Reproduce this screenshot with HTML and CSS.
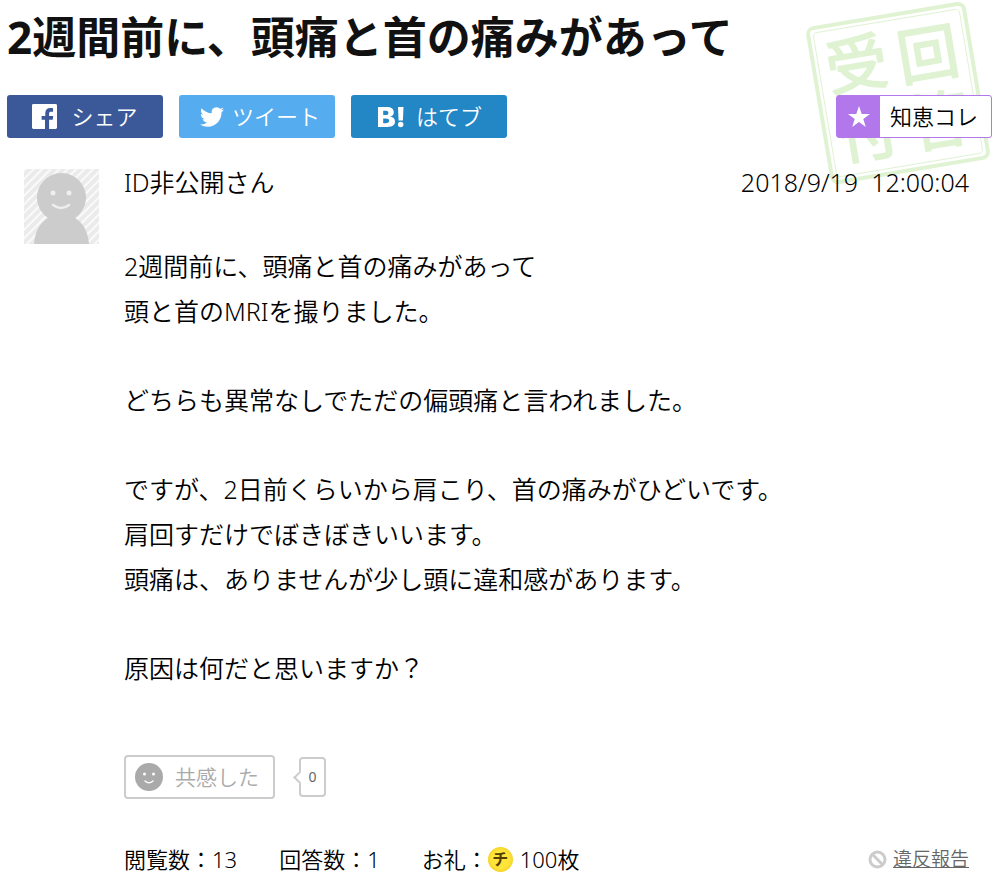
FILE: index.html
```html
<!DOCTYPE html>
<html lang="ja">
<head>
    <meta charset="UTF-8">
    <meta name="viewport" content="width=device-width, initial-scale=1.0">
    <title>2週間前に、頭痛と首の痛みがあって</title>
    <link rel="stylesheet" href="styles.css">
</head>
<body>
    <div class="question">
        <svg class="stamp" viewBox="0 0 188 188" aria-hidden="true">
            <g transform="translate(93 93) rotate(-9.5)">
                <rect x="-79" y="-78" width="158" height="156" rx="6" fill="none" stroke-width="4"/>
                <rect x="-74" y="-73" width="148" height="146" rx="4" fill="none" stroke-width="1"/>
                <g class="stamp-text">
                    <text x="-36" y="-13">受</text>
                    <text x="36" y="-11">回</text>
                    <text x="-36" y="57">付</text>
                    <text x="36" y="57">答</text>
                </g>
            </g>
        </svg>

        <h1 class="title">2週間前に、頭痛と首の痛みがあって</h1>

        <div class="bar">
            <a href="#" class="share facebook">
                <svg width="25" height="25" viewBox="0 0 26 26" aria-hidden="true">
                    <path fill="#fff" d="M1.500 0h23A1.500 1.500 0 0 1 26 1.500v23a1.500 1.500 0 0 1-1.500 1.500h-6.700v-9.500h3.700l.6-4h-4.300V10c0-1.300.6-2 2.100-2h2V4.400c-.8-.1-1.800-.2-2.800-.2-3.200 0-5.300 1.900-5.300 5.300v3H10v4h3.500V26h-12A1.500 1.500 0 0 1 0 24.500v-23A1.500 1.500 0 0 1 1.500 0z"/>
                </svg>
                <span>シェア</span>
            </a>
            <a href="#" class="share twitter">
                <svg width="24" height="24" viewBox="0 0 24 24" aria-hidden="true">
                    <path fill="#fff" d="M23.950 4.570a10 10 0 0 1-2.820.780 4.960 4.960 0 0 0 2.160-2.730c-.950.560-2 .960-3.130 1.190a4.920 4.920 0 0 0-8.380 4.480C7.690 8.100 4.070 6.130 1.640 3.160a4.820 4.820 0 0 0-.670 2.480c0 1.710.870 3.210 2.190 4.100a4.900 4.900 0 0 1-2.230-.620v.060a4.920 4.920 0 0 0 3.950 4.830 5 5 0 0 1-2.210.080 4.940 4.940 0 0 0 4.600 3.420A9.870 9.870 0 0 1 0 19.540a14 14 0 0 0 7.550 2.210c9.050 0 14-7.500 14-13.980 0-.210 0-.420-.020-.630a9.940 9.940 0 0 0 2.460-2.550z"/>
                </svg>
                <span>ツイート</span>
            </a>
            <a href="#" class="share hatena">
                <svg width="26" height="22" viewBox="0 0 26 22" aria-hidden="true">
                    <path fill="#fff" fill-rule="evenodd" d="M0 1h8.500c4.700 0 7.300 1.700 7.300 5.200 0 2.500-1.400 4-4 4.400 3.200.4 5.200 2 5.200 5 0 3.700-2.700 5.400-7.600 5.400H0zM5.200 4.800v4.300h2c2.100 0 3.200-.6 3.200-2.200 0-1.500-1.100-2.100-3.200-2.100zM5.200 12.500v4.700h2.400c2.300 0 3.600-.7 3.600-2.400 0-1.600-1.300-2.300-3.600-2.300z"/>
                    <path fill="#fff" d="M20 1h5.500l-.6 13.500h-4.300z"/>
                    <circle cx="22.700" cy="18.500" r="2.700" fill="#fff"/>
                </svg>
                <span>はてブ</span>
            </a>
            <a href="#" class="collect">
                <span class="collect-icon">
                    <svg width="24" height="24" viewBox="0 0 24 24" aria-hidden="true">
                        <path fill="#fff" d="M12 1l2.700 7.900H23l-6.700 5 2.500 8.100-6.800-4.900L5.200 22l2.500-8.100L1 8.900h8.300z"/>
                    </svg>
                </span>
                <span class="collect-text">知恵コレ</span>
            </a>
        </div>

        <div class="detail">
            <svg class="avatar" viewBox="0 0 75 75" role="img" aria-label="ID非公開さん">
                <defs>
                    <pattern id="stripe" width="6" height="6" patternUnits="userSpaceOnUse" patternTransform="rotate(45)">
                        <rect width="6" height="6" fill="#ebebeb"/>
                        <rect width="2" height="6" fill="#fafafa"/>
                    </pattern>
                </defs>
                <rect width="75" height="75" fill="url(#stripe)"/>
                <path fill="#ccc" d="M10 75c1-13 6-21 14-26a24.500 24.500 0 1 1 27 0c8 5 13 13 14 26z"/>
                <circle cx="29" cy="24" r="2.500" fill="#eee"/>
                <circle cx="45" cy="24" r="2.500" fill="#eee"/>
                <path d="M29 36q8 6 16 0" fill="none" stroke="#eee" stroke-width="2.500" stroke-linecap="round"/>
            </svg>

            <div class="main">
                <div class="info">
                    <span class="name">ID非公開さん</span>
                    <span class="date">2018/9/19&nbsp; 12:00:04</span>
                </div>

                <div class="text">
                    <p>2週間前に、頭痛と首の痛みがあって<br>頭と首のMRIを撮りました。</p>
                    <p>どちらも異常なしでただの偏頭痛と言われました。</p>
                    <p>ですが、2日前くらいから肩こり、首の痛みがひどいです。<br>肩回すだけでぼきぼきいいます。<br>頭痛は、ありませんが少し頭に違和感があります。</p>
                    <p>原因は何だと思いますか？</p>
                </div>

                <div class="empathy">
                    <button type="button" class="empathy-btn">
                        <svg width="28" height="28" viewBox="0 0 28 28" aria-hidden="true">
                            <circle cx="14" cy="14" r="14" fill="#aaa"/>
                            <circle cx="9.500" cy="11" r="1.500" fill="#fff"/>
                            <circle cx="18.500" cy="11" r="1.500" fill="#fff"/>
                            <path d="M10 18q4 3.500 8 0" fill="none" stroke="#fff" stroke-width="1.500" stroke-linecap="round"/>
                        </svg>
                        <span>共感した</span>
                    </button>
                    <span class="balloon">0</span>
                </div>

                <div class="foot">
                    <span>閲覧数：13</span>
                    <span>回答数：1</span>
                    <span class="reward">お礼：<span class="coin">チ</span>100枚</span>
                    <a href="#" class="report">
                        <svg width="19" height="19" viewBox="0 0 19 19" aria-hidden="true">
                            <circle cx="9.500" cy="9.500" r="7.500" fill="none" stroke="#ccc" stroke-width="3"/>
                            <path d="M4 4l11 11" stroke="#ccc" stroke-width="3"/>
                        </svg>
                        <span>違反報告</span>
                    </a>
                </div>
            </div>
        </div>
    </div>
</body>
</html>
```
FILE: styles.css
```css
/* 全体 */
body {
    margin: 0;
    background: #fff;
    color: #000;
    font-family: "Noto Sans", "Noto Sans CJK JP", sans-serif;
    font-size: 22px;
    font-weight: 350;
}
a {
    color: inherit;
    text-decoration: none;
}
svg {
    flex: none;
}
.question {
    position: relative;
    padding: 7px 11px 0 7px;
}

/* 回答受付スタンプ */
.stamp {
    position: absolute;
    top: 0;
    right: 10px;
    width: 188px;
    height: 188px;
    stroke: #dff3d3;
}
.stamp-text {
    fill: #dff3d3;
    stroke-width: 2;
    stroke-linejoin: round;
    font-family: "Noto Sans CJK JP", sans-serif;
    font-size: 61px;
    font-weight: 400;
    text-anchor: middle;
}

/* タイトル */
.title {
    position: relative;
    margin: 0;
    color: #111;
    font-size: 44px;
    font-weight: bold;
    line-height: 60px;
}

/* シェアボタン */
.bar {
    position: relative;
    display: flex;
    gap: 16px;
    margin-top: 28px;
}
.share {
    display: flex;
    align-items: center;
    justify-content: center;
    box-sizing: border-box;
    width: 156px;
    height: 43px;
    border-radius: 3px;
    color: #fff;
    line-height: 43px;
}
.facebook {
    gap: 14px;
    background: #3b5998;
}
.twitter {
    gap: 8px;
    padding-left: 6px;
    background: #55acee;
}
.hatena {
    gap: 12px;
    padding-left: 2px;
    background: #2386c5;
}
.collect {
    display: flex;
    box-sizing: border-box;
    width: 156px;
    height: 43px;
    margin-left: auto;
    border: 1px solid #b177eb;
    border-radius: 3px;
    background: #fff;
    line-height: 41px;
}
.collect-icon {
    display: flex;
    align-items: center;
    justify-content: center;
    width: 43px;
    background: #b177eb;
}
.collect-text {
    padding-left: 10px;
}

/* 質問 */
.detail {
    position: relative;
    display: flex;
    align-items: flex-start;
    gap: 25px;
    padding: 31px 23px 0 17px;
}
.avatar {
    width: 75px;
    height: 75px;
}
.main {
    flex: 1;
}
.info {
    display: flex;
    justify-content: space-between;
    font-size: 25px;
    line-height: 26px;
}
.text {
    margin-top: 49px;
    font-size: 25px;
    line-height: 45px;
}
.text p {
    margin: 0 0 44px;
}

/* 共感した */
.empathy {
    display: flex;
    align-items: center;
    gap: 24px;
    margin-top: 64px;
}
.empathy-btn {
    display: flex;
    align-items: center;
    gap: 12px;
    height: 44px;
    padding: 0 14px 0 9px;
    border: 2px solid #ccc;
    border-radius: 4px;
    background: #fff;
    color: #aaa;
    font-family: inherit;
    font-size: 21px;
    font-weight: inherit;
    line-height: 36px;
}
.balloon {
    position: relative;
    box-sizing: border-box;
    width: 27px;
    height: 40px;
    border: 2px solid #ccc;
    border-radius: 4px;
    color: #666;
    font-size: 14px;
    font-weight: 400;
    line-height: 36px;
    text-align: center;
}
.balloon::before {
    content: "";
    position: absolute;
    top: 14px;
    left: -6px;
    width: 7px;
    height: 7px;
    border: solid #ccc;
    border-width: 0 0 2px 2px;
    background: #fff;
    transform: rotate(45deg);
}

/* 閲覧数など */
.foot {
    display: flex;
    align-items: center;
    gap: 42px;
    margin-top: 43px;
    line-height: 34px;
}
.reward {
    display: flex;
    align-items: center;
}
.coin {
    width: 25px;
    height: 25px;
    margin-right: 7px;
    border-radius: 50%;
    background: radial-gradient(circle, #ffe43c 50%, #e8bc08 100%);
    color: #553f00;
    font-size: 16px;
    font-weight: bold;
    line-height: 24px;
    text-align: center;
}
.report {
    display: flex;
    align-items: center;
    gap: 6px;
    margin-left: auto;
    color: #666;
    font-size: 19px;
}
.report span {
    text-decoration: underline;
}
```
